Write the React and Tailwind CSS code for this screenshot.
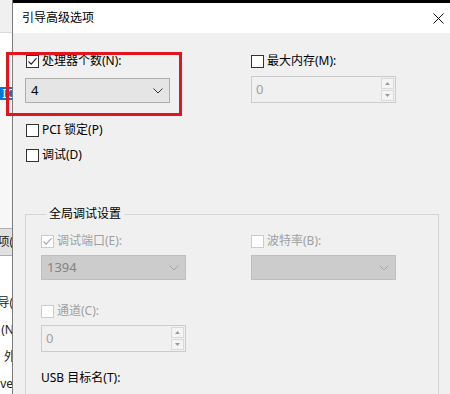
import React from 'react';

const font = "font-['Noto_Sans','Noto_Sans_CJK_SC',sans-serif]";

function Check({ checked, disabled }) {
  return (
    <span
      className={
        'w-[13px] h-[13px] flex items-center justify-center border bg-white shrink-0 ' +
        (disabled ? 'border-[#cccccc]' : 'border-[#333333]')
      }
    >
      {checked && (
        <svg width="11" height="11" viewBox="0 0 11 11">
          <path d="M1.5 5.5 L4.2 8.2 L9.5 2.2" fill="none" stroke={disabled ? '#a8a8a8' : '#222'} strokeWidth="1.1" />
        </svg>
      )}
    </span>
  );
}

function CheckRow({ label, checked, disabled }) {
  return (
    <div className="h-[14px] flex items-center gap-[3px]">
      <Check checked={checked} disabled={disabled} />
      <span className={'text-[12px] leading-[14px] whitespace-nowrap ' + (disabled ? 'text-[#a0a0a0]' : 'text-black')}>
        {label}
      </span>
    </div>
  );
}

function Chevron({ color }) {
  return (
    <svg width="10" height="6" viewBox="0 0 10 6">
      <path d="M0.5 0.5 L5 5 L9.5 0.5" fill="none" stroke={color} strokeWidth="1" />
    </svg>
  );
}

function Select({ value, disabled, className }) {
  return (
    <div
      className={
        'h-[25px] w-[145px] flex items-center justify-between pl-[5px] pr-[6px] border ' +
        (disabled ? 'bg-[#cccccc] border-[#bfbfbf] text-[#838383]' : 'bg-[#e5e5e5] border-[#adadad] text-black') +
        ' ' + (className || '')
      }
    >
      <span className="text-[13px] leading-none">{value}</span>
      <Chevron color={disabled ? '#a6a6a6' : '#333'} />
    </div>
  );
}

function Spin({ value, className }) {
  return (
    <div className={'h-[27px] w-[145px] flex border border-[#cccccc] bg-[#f0f0f0] ' + (className || '')}>
      <span className="flex-1 flex items-center pl-[4px] text-[13px] text-[#a0a0a0]">{value}</span>
      <div className="w-[15px] flex flex-col p-px gap-px">
        <div className="flex-1 flex items-center justify-center border border-[#dadada] bg-[#f4f4f4]">
          <svg width="5" height="3" viewBox="0 0 5 3"><path d="M0 3 L2.5 0 L5 3 Z" fill="#9a9a9a" /></svg>
        </div>
        <div className="flex-1 flex items-center justify-center border border-[#dadada] bg-[#f4f4f4]">
          <svg width="5" height="3" viewBox="0 0 5 3"><path d="M0 0 L2.5 3 L5 0 Z" fill="#9a9a9a" /></svg>
        </div>
      </div>
    </div>
  );
}

function BackWindow() {
  return (
    <div className="w-[12px] shrink-0 flex flex-col bg-white overflow-hidden text-[12px] text-[#222]">
      <div className="h-[33px] bg-[#f0f0f0] border-b border-[#d9d9d9]" />
      <div className="h-[54px]" />
      <div className="h-[13px] bg-[#0078d7] text-white flex items-center justify-end leading-none whitespace-nowrap">
        <span className="-mr-[2px]">IC</span>
      </div>
      <div className="h-[128px] bg-[#f7f7f7]" />
      <div className="h-[28px] bg-[#e1e1e1] border-y border-[#adadad] flex items-center justify-end whitespace-nowrap">
        <span className="-mr-[1px]">项(</span>
      </div>
      <div className="flex flex-col items-end whitespace-nowrap pt-[39px] gap-[12px] leading-[15px]">
        <span className="-mr-[1px]">导(</span>
        <span className="-mr-[2px]">(N</span>
        <span className="-mr-[4px]">外</span>
        <span className="-mr-[1px]">ve</span>
      </div>
    </div>
  );
}

export default function App() {
  return (
    <div className={'w-[450px] h-[394px] relative flex overflow-hidden bg-[#f0f0f0] ' + font}>
      <BackWindow />
      <div className="flex-1 flex flex-col border-l border-[#7d7d7d]">
        <div className="h-[3px] bg-black shrink-0" />
        <div className="h-[30px] bg-white flex items-center justify-between pl-[9px] pr-[6px] shrink-0">
          <span className="text-[12px] text-black leading-none">引导高级选项</span>
          <svg width="11" height="11" viewBox="0 0 11 11">
            <path d="M0.5 0.5 L10.5 10.5 M10.5 0.5 L0.5 10.5" stroke="#111" strokeWidth="1" />
          </svg>
        </div>
        <div className="flex-1 pl-[12px] pt-[21px]">
          <div className="grid grid-cols-[225px_1fr] pl-px">
            <div className="flex flex-col">
              <CheckRow label="处理器个数(N):" checked />
              <Select value="4" className="mt-[10px] -ml-px" />
            </div>
            <div className="flex flex-col">
              <CheckRow label="最大内存(M):" />
              <Spin value="0" className="mt-[8px]" />
            </div>
          </div>
          <div className="flex flex-col pl-px mt-[20px] gap-[11px]">
            <CheckRow label="PCI 锁定(P)" />
            <CheckRow label="调试(D)" />
          </div>
          <fieldset className="mt-[44px] w-[414px] h-[200px] border border-[#d5d5d5] pl-[15px] pt-[12px]">
            <legend className="ml-[5px] px-[3px] text-[12px] leading-[16px] text-black">全局调试设置</legend>
            <div className="grid grid-cols-[210px_1fr]">
              <div className="flex flex-col">
                <CheckRow label="调试端口(E):" checked disabled />
                <Select value="1394" disabled className="mt-[7px]" />
                <div className="mt-[24px]">
                  <CheckRow label="通道(C):" disabled />
                </div>
                <Spin value="0" className="mt-[7px]" />
                <div className="mt-[19px] h-[14px] flex items-center text-[12px] text-black whitespace-nowrap">
                  USB 目标名(T):
                </div>
              </div>
              <div className="flex flex-col">
                <CheckRow label="波特率(B):" disabled />
                <Select value="" disabled className="mt-[7px]" />
              </div>
            </div>
          </fieldset>
        </div>
      </div>
      <div className="absolute left-[6px] top-[52px] w-[176px] h-[64px] border-[3px] border-[#e3141c]" />
    </div>
  );
}
